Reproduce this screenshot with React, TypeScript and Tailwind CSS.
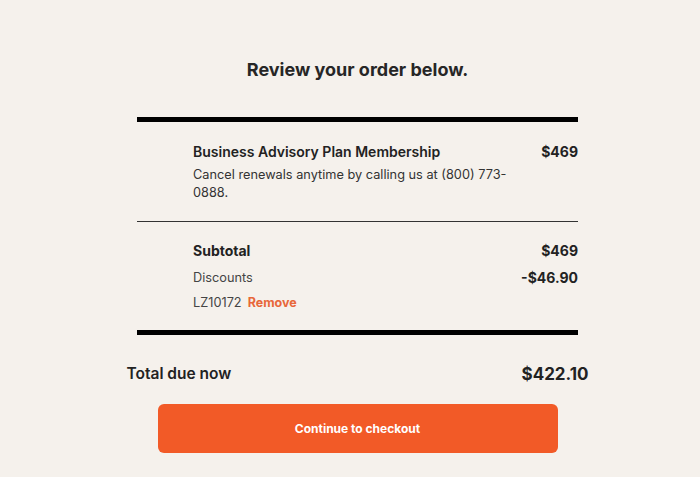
import React from "react";

const font = { fontFamily: "Inter, 'Noto Sans', sans-serif" };

export default function App() {
  return (
    <div
      className="min-h-[477px] w-full bg-[#f5f1ec] pl-[15px] text-[#222]"
      style={font}
    >
      <div className="mx-auto flex w-[462px] flex-col items-center pt-[58px]">
        <h1 className="text-[18px] font-bold leading-[24px] text-[#262626]">
          Review your order below.
        </h1>

        <div className="mt-[35px] w-[441px]">
          <div className="h-[5px] bg-black" />

          {/* item */}
          <div className="flex justify-between pb-[19px] pl-[56px] pt-[20px]">
            <div className="w-[320px]">
              <p className="text-[14px] font-semibold leading-[20px] text-[#222]">
                Business Advisory Plan Membership
              </p>
              <p className="mt-[4px] text-[12.75px] leading-[18px] text-[#333]">
                Cancel renewals anytime by calling us at (800) 773-
                <br />
                0888.
              </p>
            </div>
            <p className="text-[14px] font-bold leading-[20px]">$469</p>
          </div>

          <div className="h-px bg-[#333]" />

          {/* totals */}
          <div className="pb-[16px] pl-[56px] pt-[18px]">
            <div className="flex justify-between">
              <p className="text-[14px] font-bold leading-[22px]">Subtotal</p>
              <p className="text-[14px] font-bold leading-[22px]">$469</p>
            </div>
            <div className="mt-[5px] flex justify-between">
              <p className="text-[12.75px] leading-[22px] text-[#444]">Discounts</p>
              <p className="text-[14px] font-bold leading-[22px]">-$46.90</p>
            </div>
            <div className="mt-[3px] flex items-center gap-[6px]">
              <span className="text-[12.75px] leading-[22px] text-[#444]">LZ10172</span>
              <a href="#" className="text-[12.5px] font-bold leading-[22px] text-[#e8673a]">
                Remove
              </a>
            </div>
          </div>

          <div className="h-[5px] bg-black" />
        </div>

        <div className="mt-[27px] flex w-[462px] items-center justify-between">
          <p className="text-[15.5px] font-semibold leading-[22px] text-[#222]">Total due now</p>
          <p className="text-[17px] font-bold leading-[24px] text-[#222]">$422.10</p>
        </div>

        <button className="mt-[18px] h-[49px] w-[400px] rounded-[6px] bg-[#f25a27] text-[12px] font-bold text-white">
          Continue to checkout
        </button>
      </div>
    </div>
  );
}
